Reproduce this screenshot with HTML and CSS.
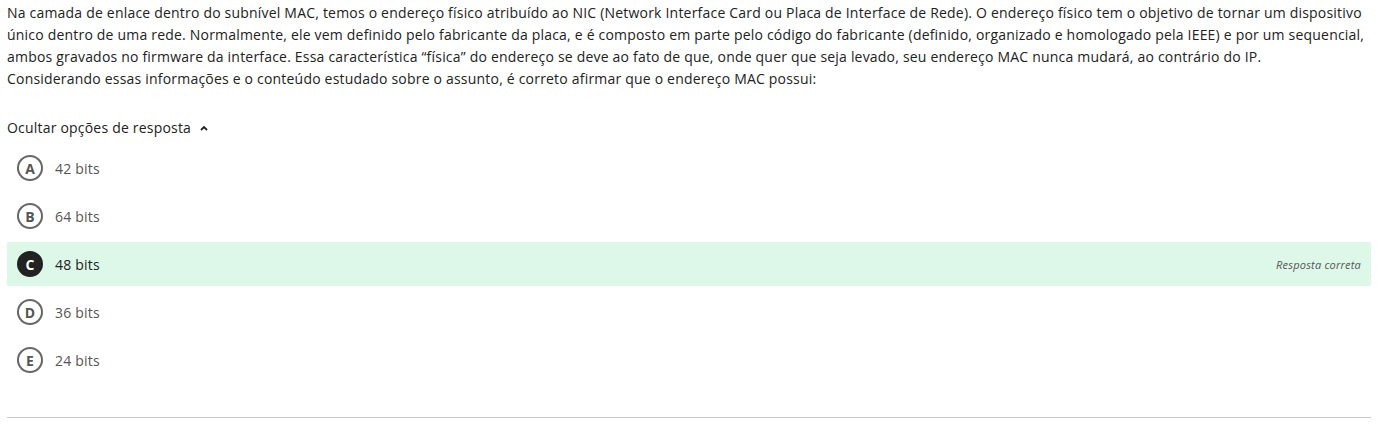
FILE: index.html
```html
<!DOCTYPE html>
<html lang="pt">
<head>
<meta charset="utf-8">
<link rel="stylesheet" href="styles.css">
</head>
<body>
<div class="question">
  <p class="statement">Na camada de enlace dentro do subnível MAC, temos o endereço físico atribuído ao NIC (Network Interface Card ou Placa de Interface de Rede). O endereço físico tem o objetivo de tornar um dispositivo único dentro de uma rede. Normalmente, ele vem definido pelo fabricante da placa, e é composto em parte pelo código do fabricante (definido, organizado e homologado pela IEEE) e por um sequencial, ambos gravados no firmware da interface. Essa característica “física” do endereço se deve ao fato de que, onde quer que seja levado, seu endereço MAC nunca mudará, ao contrário do IP.<br>Considerando essas informações e o conteúdo estudado sobre o assunto, é correto afirmar que o endereço MAC possui:</p>
  <div class="toggle">Ocultar opções de resposta
    <svg class="chev" width="10" height="8" viewBox="0 0 10 8"><path d="M2 6 L5 3 L8 6" fill="none" stroke="#222" stroke-width="1.8"/></svg>
  </div>
  <ul class="options">
    <li class="option"><span class="letter">A</span><span class="label">42 bits</span></li>
    <li class="option"><span class="letter">B</span><span class="label">64 bits</span></li>
    <li class="option correct"><span class="letter">C</span><span class="label">48 bits</span><span class="tag">Resposta correta</span></li>
    <li class="option"><span class="letter">D</span><span class="label">36 bits</span></li>
    <li class="option"><span class="letter">E</span><span class="label">24 bits</span></li>
  </ul>
  <hr class="sep">
</div>
</body>
</html>
```

FILE: styles.css
```css
html, body {
  margin: 0;
  padding: 0;
  background: #fff;
}
body {
  font-family: "Open Sans", "DejaVu Sans", sans-serif;
  font-size: 14px;
  color: #222;
  letter-spacing: 0.2px;
}
.question {
  padding: 2px 13px 0 7px;
}
.statement {
  margin: 0;
  line-height: 22px;
}
.toggle {
  margin-top: 27px;
  line-height: 22px;
  display: flex;
  align-items: center;
  gap: 8px;
}
.chev {
  display: block;
}
.options {
  list-style: none;
  margin: 7px 0 0 0;
  padding: 0;
  display: flex;
  flex-direction: column;
  gap: 4px;
}
.option {
  height: 44px;
  display: flex;
  align-items: center;
  padding-left: 10px;
  padding-right: 10px;
  color: #555;
  border-radius: 2px;
}
.letter {
  box-sizing: border-box;
  width: 26px;
  height: 26px;
  border: 2px solid #666;
  border-radius: 50%;
  display: flex;
  align-items: center;
  justify-content: center;
  font-weight: 700;
  font-size: 14px;
  letter-spacing: 0;
  color: #555;
  margin-right: 12px;
}
.label {
  flex: 1;
}
.correct {
  background: #ddf8e9;
  color: #222;
}
.correct .letter {
  background: #222;
  border-color: #222;
  color: #fff;
}
.tag {
  font-style: italic;
  font-size: 11px;
  color: #555;
}
.sep {
  margin: 35px 0 0 0;
  border: none;
  border-top: 1px solid #ccc;
  height: 0;
}
```
